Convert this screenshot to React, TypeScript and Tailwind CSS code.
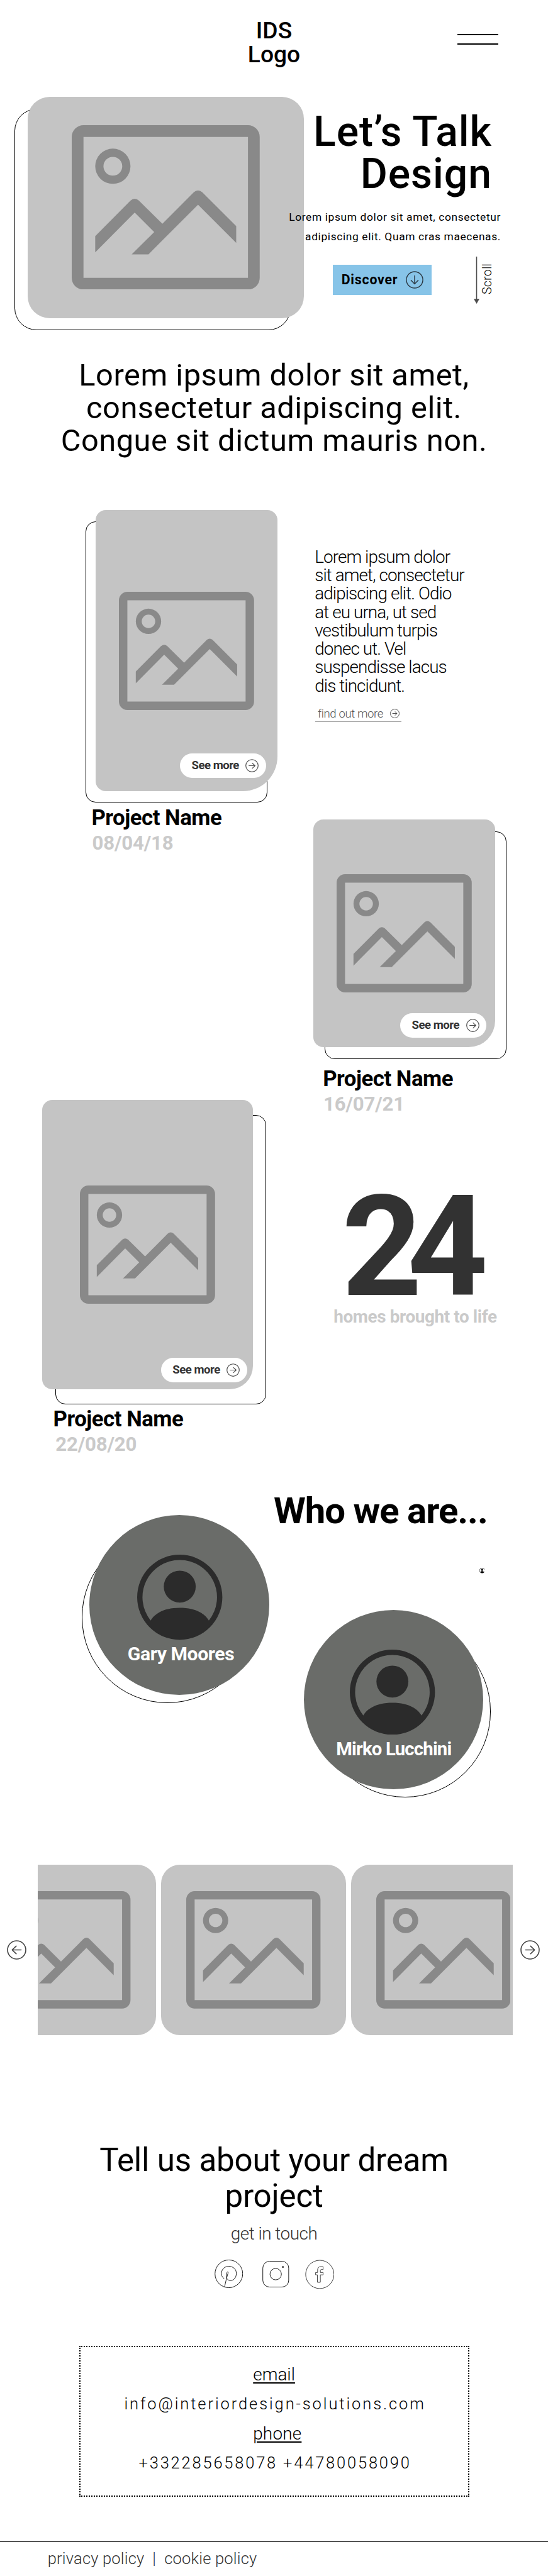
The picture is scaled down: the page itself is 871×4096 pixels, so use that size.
import React from "react";
import { BsPersonCircle } from "react-icons/bs";

function PictureIcon({ className = "" }: { className?: string }) {
  return (
    <svg viewBox="0 0 16 14" className={className} fill="#898989" aria-hidden="true">
      <path
        fillRule="evenodd"
        d="M1 0h14a1 1 0 0 1 1 1v12a1 1 0 0 1-1 1H1a1 1 0 0 1-1-1V1a1 1 0 0 1 1-1zM1 1v12h14V1z"
      />
      <path
        fillRule="evenodd"
        d="M3.5 2a1.5 1.5 0 1 1 0 3 1.5 1.5 0 0 1 0-3zm0 .7a.8.8 0 1 0 0 1.6.8.8 0 0 0 0-1.6z"
      />
      <path d="M2 9.45 5 6.42q.36-.3.72 0l2 1.98 2.68-2.7q.35-.3.7 0L14 8.6v1.43L10.75 6.77 6.53 11H5.1l1.92-1.9-1.66-1.66L2 10.83z" />
    </svg>
  );
}

function CircleArrow({ className = "", stroke = 2.2 }: { className?: string; stroke?: number }) {
  return (
    <svg viewBox="0 0 42 42" className={className} fill="none" stroke="currentColor" strokeWidth={stroke} aria-hidden="true">
      <circle cx="21" cy="21" r="19.6" />
      <path d="M11.3 21h19.2M22 12.6l8.8 8.4-8.8 8.4" strokeLinecap="round" strokeLinejoin="round" />
    </svg>
  );
}

function SeeMore({ className = "" }: { className?: string }) {
  return (
    <button
      className={`absolute flex h-[39px] w-[137px] items-center rounded-full bg-white pl-[18.5px] text-[18.6px] leading-none font-bold tracking-[-0.5px] text-[#333] ${className}`}
    >
      See more
      <CircleArrow className="ml-auto mr-[11.5px] size-[21px] text-[#4a4a4a]" stroke={2.3} />
    </button>
  );
}

type CardProps = {
  size: string;
  outline: string;
  corner: string;
  pill: string;
};

function ProjectCard({ size, outline, corner, pill }: CardProps) {
  return (
    <div className={`relative ${size}`}>
      <div className={`absolute size-full rounded-[16px] border border-black ${outline}`} />
      <div className={`relative size-full rounded-[16px] bg-[#c4c4c4] ${corner}`}>
        <PictureIcon className="w-[214.8px]" />
        <SeeMore className={pill} />
      </div>
    </div>
  );
}

function ProjectLabel({ name, date, nameClass, dateClass }: { name: string; date: string; nameClass: string; dateClass: string }) {
  return (
    <>
      <h3 className={`text-[34.8px] leading-[40px] font-bold tracking-[-0.5px] whitespace-nowrap ${nameClass}`}>{name}</h3>
      <p className={`mt-px text-[31.2px] leading-[40px] font-bold tracking-[-0.2px] text-[#cacaca] ${dateClass}`}>{date}</p>
    </>
  );
}

function Member({ name, ring, avatar, label }: { name: string; ring: string; avatar: string; label: string }) {
  return (
    <div className="relative size-[285.3px]">
      <div className={`absolute size-[272.5px] rounded-full border border-black ${ring}`} />
      <div className="relative flex size-full flex-col items-center rounded-full bg-[#6a6c69] pt-[63px]">
        <BsPersonCircle className={`size-[135.4px] text-[#2b2b2b] ${avatar}`} />
        <p className={`leading-[36px] font-bold whitespace-nowrap text-white ${label}`}>{name}</p>
      </div>
    </div>
  );
}

function Slide() {
  return (
    <div className="flex h-full w-[293.3px] shrink-0 items-center justify-center rounded-[30px] bg-[#c4c4c4]">
      <PictureIcon className="w-[213.4px]" />
    </div>
  );
}

export default function App() {
  return (
    <div className="h-[4096px] w-[871px] overflow-hidden bg-white font-['Roboto',sans-serif] text-black">
      <header className="grid h-[154px] grid-cols-[1fr_auto_1fr]">
        <div className="col-start-2 pt-[30.3px] text-center text-[37.2px] leading-[37.2px] font-medium">
          IDS
          <br />
          Logo
        </div>
        <div className="mt-[53.5px] mr-[79px] flex w-[65.5px] flex-col gap-[13.3px] justify-self-end">
          <span className="h-[2px] bg-black" />
          <span className="h-[2px] bg-black" />
        </div>
      </header>

      <section className="flex h-[416.7px] items-start">
        <div className="relative ml-[44px] h-[351.5px] w-[439px] shrink-0">
          <div className="absolute top-[19.3px] left-[-21.5px] size-full rounded-[35px] border border-black" />
          <div className="relative flex size-full items-center justify-center rounded-[35px] bg-[#c4c4c4]">
            <PictureIcon className="w-[298.8px]" />
          </div>
        </div>
        <div className="relative -ml-[32px] w-[345px] pt-[22.6px] text-right">
          <h1 className="pr-[14px] text-[66.1px] leading-[66.9px] font-medium tracking-[0.95px] whitespace-nowrap">
            Let’s Talk
            <br />
            Design
          </h1>
          <p className="mt-[19.2px] text-[17.4px] leading-[31.3px] tracking-[0.62px] whitespace-nowrap">
            Lorem ipsum dolor sit amet, consectetur
            <br />
            adipiscing elit. Quam cras maecenas.
          </p>
          <div className="mt-[15.8px] flex items-start">
            <button className="mt-[13px] ml-[77.7px] flex h-[48.3px] w-[157px] items-center bg-[#87c4e8] pl-[14px] text-[21.3px] leading-none font-bold tracking-[0.8px]">
              Discover
              <CircleArrow className="mr-[13px] ml-auto size-[28px] rotate-90 text-[#2d3b46]" />
            </button>
            <svg viewBox="0 0 9 75" className="ml-[67.4px] h-[75px] w-[9px]" aria-hidden="true">
              <path d="M4.5 0v68" stroke="#4d4d4d" strokeWidth="1.6" />
              <path d="M0 67.3h9L4.5 75z" fill="#4d4d4d" />
            </svg>
            <span className="ml-[3.3px] h-[60px] rotate-180 text-left text-[19.6px] leading-[20px] font-light tracking-[0.2px] [writing-mode:vertical-rl]">
              Scroll
            </span>
          </div>
        </div>
      </section>

      <p className="h-[156px] text-center text-[48.8px] leading-[52px] tracking-[0.5px]">
        Lorem ipsum dolor sit amet,
        <br />
        consectetur adipiscing elit.
        <br />
        Congue sit dictum mauris non.
      </p>

      <section className="mt-[84px] flex h-[492.3px] items-start">
        <div className="ml-[152.4px] w-[289px]">
          <ProjectCard
            size="h-[447.6px] w-[289px]"
            outline="top-[18px] left-[-16px]"
            corner="rounded-br-[55px] pt-[130.2px] pl-[36.5px]"
            pill="top-[387.6px] left-[133.6px]"
          />
          <ProjectLabel name="Project Name" date="08/04/18" nameClass="mt-[22px] ml-[-7px]" dateClass="ml-[-5.8px]" />
        </div>
        <div className="mt-[60px] ml-[58.8px]">
          <p className="text-[27.87px] leading-[29.3px] font-light tracking-[-0.9px] whitespace-nowrap">
            Lorem ipsum dolor
            <br />
            sit amet, consectetur
            <br />
            adipiscing elit. Odio
            <br />
            at eu urna, ut sed
            <br />
            vestibulum turpis
            <br />
            donec ut. Vel
            <br />
            suspendisse lacus
            <br />
            dis tincidunt.
          </p>
          <a className="mt-[17px] ml-[0.8px] flex h-[26px] w-[136.6px] items-center border-b border-[#999] pl-[4px] text-[18.6px] leading-[24px] font-light tracking-[-0.4px] text-[#555]">
            find out more
            <CircleArrow className="mr-[3px] ml-auto size-[15px] text-[#444]" stroke={2.6} />
          </a>
        </div>
      </section>

      <section className="h-[445.8px] pl-[497.5px]">
        <ProjectCard
          size="h-[361.6px] w-[289px]"
          outline="top-[19.3px] left-[18.5px]"
          corner="rounded-br-[42px] pt-[87.3px] pl-[37.5px]"
          pill="top-[308.3px] left-[138.6px]"
        />
        <ProjectLabel name="Project Name" date="16/07/21" nameClass="mt-[30.5px] ml-[15.7px]" dateClass="ml-[16.5px]" />
      </section>

      <section className="flex h-[620.6px] items-start">
        <div className="ml-[66.8px] w-[335.2px]">
          <ProjectCard
            size="h-[460px] w-[335.2px]"
            outline="top-[24.5px] left-[21.5px]"
            corner="rounded-br-[37px] pt-[136px] pl-[60.7px]"
            pill="top-[409.9px] left-[189px]"
          />
          <ProjectLabel name="Project Name" date="22/08/20" nameClass="mt-[27.5px] ml-[17.7px]" dateClass="ml-[21.5px]" />
        </div>
        <div className="mt-[139.5px] ml-[118px] w-[280px] text-center">
          <p className="pr-[25px] text-[223px] leading-[190px] font-bold tracking-[-23.5px] text-[#323232]">24</p>
          <p className="text-[27.9px] leading-[32px] font-bold tracking-[-0.4px] whitespace-nowrap text-[#cacaca]">
            homes brought to life
          </p>
        </div>
      </section>

      <section>
        <h2 className="ml-[435px] text-[58.1px] leading-[66px] font-bold tracking-[-1px] whitespace-nowrap">Who we are...</h2>
        <div className="-mt-[26px] flex items-start">
          <div className="ml-[142.4px]">
            <Member
              name="Gary Moores"
              ring="top-[25.7px] left-[-12.6px]"
              avatar="ml-[2px]"
              label="mt-[4px] pl-[5px] text-[30.2px] tracking-[-0.4px]"
            />
          </div>
          <div className="ml-[55.5px]">
            <BsPersonCircle className="mt-[84px] ml-[278.5px] size-[8.6px]" />
            <div className="mt-[57.6px]">
              <Member
                name="Mirko Lucchini"
                ring="top-[25.6px] left-[24.5px]"
                avatar="mr-[4px]"
                label="mt-[5px] text-[29.3px] tracking-[-0.8px]"
              />
            </div>
          </div>
        </div>
      </section>

      <section className="mt-[120px] flex h-[271.3px] items-center">
        <CircleArrow className="ml-[11.4px] size-[31px] shrink-0 rotate-180 text-[#444]" />
        <div className="ml-[17.6px] h-full w-[755px] overflow-hidden">
          <div className="-ml-[105.5px] flex h-full gap-[8.5px]">
            <Slide />
            <Slide />
            <Slide />
          </div>
        </div>
        <CircleArrow className="ml-[12.3px] size-[31px] shrink-0 text-[#444]" />
      </section>

      <section className="mt-[171.3px] text-center">
        <h2 className="text-[51.1px] leading-[56.4px] tracking-[-0.2px]">
          Tell us about your dream
          <br />
          project
        </h2>
        <p className="mt-[15.8px] text-[27.9px] leading-[32px] font-light tracking-[-0.5px] text-[#333]">get in touch</p>
        <div className="mt-[24px] flex h-[48px] items-center pl-[340.6px]">
          <svg viewBox="28 59 188 188" className="size-[45.5px]" fill="none" stroke="#111" strokeWidth="4" aria-hidden="true">
            <circle cx="122" cy="152" r="91" />
            <path
              d="M90 183C76 172 71 158 74 142C78 118 97 103 121 103C150 103 171 121 171 149C171 176 155 196 132 196C117 196 107 186 106 170C104 157 107 142 114 139C119 138 118 145 115 153C109 172 98 216 94 238"
              strokeLinecap="round"
            />
          </svg>
          <svg viewBox="344 70 176 176" className="mt-[1px] ml-[31px] size-[42.6px]" fill="none" stroke="#111" strokeWidth="4" aria-hidden="true">
            <rect x="347" y="72.500" width="170" height="169" rx="44" />
            <circle cx="431.500" cy="157" r="37.500" />
            <circle cx="479" cy="110" r="5.500" fill="#111" stroke="none" />
          </svg>
          <svg viewBox="624 56 194 194" className="ml-[24.9px] size-[46.9px]" fill="none" stroke="#222" strokeWidth="3.6" aria-hidden="true">
            <circle cx="720.500" cy="153" r="93" />
            <path d="M742 102h-14q-22 0-22 21v17h-13v16h12v49h19v-49h18v-16h-18v-12q0-7 7-7h11z" />
          </svg>
        </div>
      </section>

      <section className="mt-[90.4px] ml-[125.6px] h-[239.6px] w-[620px] border-2 border-dotted border-black pt-[19.4px] text-center text-[25.5px] leading-[47px] font-light">
        <p className="text-[27.9px] underline decoration-[1.5px] underline-offset-[3px]">email</p>
        <p className="pl-[3px] tracking-[2.9px]">info@interiordesign-solutions.com</p>
        <p className="pl-[10.4px] text-[27.9px] tracking-[0.2px] underline decoration-[1.5px] underline-offset-[3px]">phone</p>
        <p className="pl-[3px] tracking-[2.8px]">+332285658078 +44780058090</p>
      </section>

      <footer className="mt-[71.4px] flex border-t border-black pt-[11px] pl-[75.7px] text-[25.5px] leading-[30px] font-light tracking-[0.2px] text-[#333]">
        <span>privacy policy</span>
        <span className="mx-[13px]">|</span>
        <span>cookie policy</span>
      </footer>
    </div>
  );
}
